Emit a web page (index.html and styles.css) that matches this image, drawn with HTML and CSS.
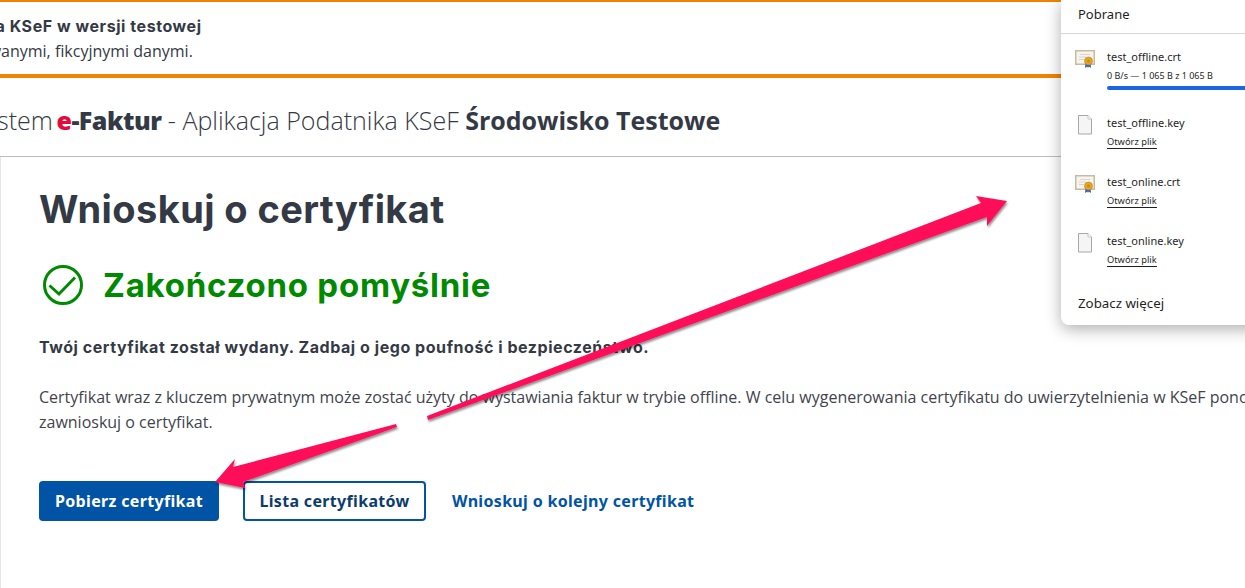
FILE: index.html
```html
<!DOCTYPE html>
<html lang="pl">
<head>
<meta charset="utf-8">
<title>Wnioskuj o certyfikat</title>
<link rel="stylesheet" href="styles.css">
</head>
<body>
<div class="page">
  <section class="banner">
    <div class="banner-inner">
      <p class="banner-title">Aplikacja KSeF w wersji testowej</p>
      <p class="banner-text">generowanymi, fikcyjnymi danymi.</p>
    </div>
  </section>
  <header class="app-header">
    <div class="app-title">System<span class="brand"><span class="brand-e">e</span>-Faktur</span> - Aplikacja Podatnika KSeF <strong class="env">Środowisko Testowe</strong></div>
  </header>
  <main class="content">
    <h1 class="page-title">Wnioskuj o certyfikat</h1>
    <div class="status">
      <svg class="status-icon" viewBox="0 0 40 40" aria-hidden="true"><circle cx="20" cy="20" r="18.500" fill="none" stroke="#008a00" stroke-width="3"/><path d="M6.500 20.500 16 29 32 12.500" fill="none" stroke="#008a00" stroke-width="3"/></svg>
      <h2 class="status-title">Zakończono pomyślnie</h2>
    </div>
    <p class="lead">Twój certyfikat został wydany. Zadbaj o jego poufność i bezpieczeństwo.</p>
    <p class="body-text">Certyfikat wraz z kluczem prywatnym może zostać użyty do wystawiania faktur w trybie offline. W celu wygenerowania certyfikatu do uwierzytelnienia w KSeF ponownie zawnioskuj o certyfikat.</p>
    <div class="actions">
      <a class="btn btn-primary">Pobierz certyfikat</a>
      <a class="btn btn-outline">Lista certyfikatów</a>
      <a class="btn-link">Wnioskuj o kolejny certyfikat</a>
    </div>
  </main>
</div>

<aside class="downloads">
  <div class="downloads-head">Pobrane</div>
  <ul class="dl-list">
    <li class="dl-item dl-item-progress">
      <svg class="dl-icon" viewBox="0 0 20 20" aria-hidden="true"><rect x="0" y="1" width="20" height="15" fill="#c9baa4"/><rect x="1.500" y="2.500" width="17" height="12" fill="#f7f4ec"/><path d="M5 5.500h10M4 8h7M4 10.500h5" stroke="#d6d6d6"/><path d="M10.500 14 10 19l2.200-1.500.8 1.500.8-1.500 2.200 1.500-.5-5z" fill="#2a5fc0"/><circle cx="13.500" cy="12" r="4" fill="#e3a724" stroke="#b9801a" stroke-width=".6"/><circle cx="13.500" cy="12" r="1.600" fill="#c98c1c"/></svg>
      <div class="dl-body">
        <div class="dl-name">test_offline.crt</div>
        <div class="dl-meta">0 B/s — 1 065 B z 1 065 B</div>
        <div class="dl-bar"></div>
      </div>
    </li>
    <li class="dl-item">
      <svg class="dl-icon" viewBox="0 0 20 20" aria-hidden="true"><path d="M3.500.5h9.500l3.500 3.500v15h-13z" fill="#f5f5f5" stroke="#a8a8a8"/><path d="M13 .5v3.500h3.500" fill="#fff" stroke="#c4c4c4"/></svg>
      <div class="dl-body">
        <div class="dl-name">test_offline.key</div>
        <a class="dl-open">Otwórz plik</a>
      </div>
    </li>
    <li class="dl-item">
      <svg class="dl-icon" viewBox="0 0 20 20" aria-hidden="true"><rect x="0" y="1" width="20" height="15" fill="#c9baa4"/><rect x="1.500" y="2.500" width="17" height="12" fill="#f7f4ec"/><path d="M5 5.500h10M4 8h7M4 10.500h5" stroke="#d6d6d6"/><path d="M10.500 14 10 19l2.200-1.500.8 1.500.8-1.500 2.200 1.500-.5-5z" fill="#2a5fc0"/><circle cx="13.500" cy="12" r="4" fill="#e3a724" stroke="#b9801a" stroke-width=".6"/><circle cx="13.500" cy="12" r="1.600" fill="#c98c1c"/></svg>
      <div class="dl-body">
        <div class="dl-name">test_online.crt</div>
        <a class="dl-open">Otwórz plik</a>
      </div>
    </li>
    <li class="dl-item">
      <svg class="dl-icon" viewBox="0 0 20 20" aria-hidden="true"><path d="M3.500.5h9.500l3.500 3.500v15h-13z" fill="#f5f5f5" stroke="#a8a8a8"/><path d="M13 .5v3.500h3.500" fill="#fff" stroke="#c4c4c4"/></svg>
      <div class="dl-body">
        <div class="dl-name">test_online.key</div>
        <a class="dl-open">Otwórz plik</a>
      </div>
    </li>
  </ul>
  <div class="dl-more">Zobacz więcej</div>
</aside>

<svg class="arrows" viewBox="0 0 1245 588" aria-hidden="true">
  <defs>
    <filter id="arrow-shadow" x="-5%" y="-5%" width="110%" height="110%"><feDropShadow dx="1" dy="2" stdDeviation="1.200" flood-color="#000" flood-opacity=".45"/></filter>
  </defs>
  <g filter="url(#arrow-shadow)" fill="#fe1159">
    <polygon points="396,424 233,467 235,459 215,482 245,488 243,482 397,427"/>
    <polygon points="427,416 981,203 976,196 1007,201 987,226 987,217 428,420"/>
  </g>
</svg>
```

FILE: styles.css
```css
* { box-sizing: border-box; }
html, body { margin: 0; padding: 0; height: 100%; overflow: hidden; background: #fff; }
body { font-family: "Open Sans", "Noto Sans", sans-serif; color: #343a45; position: relative; }
p, h1, h2, ul { margin: 0; padding: 0; }

.page { width: 1245px; height: 588px; overflow: hidden; display: flex; flex-direction: column; }

.banner { height: 78px; flex: none; border-top: 2px solid #f28300; border-bottom: 4px solid #f28300; overflow: hidden; }
.banner-inner { margin-left: -72px; padding-top: 14px; }
.banner-title { font-family: Inter, "Open Sans", sans-serif; font-weight: 700; font-size: 16px; letter-spacing: .56px; line-height: 20px; white-space: nowrap; }
.banner-text { font-size: 16px; line-height: 20px; margin: 5px 0 0 8px; white-space: nowrap; }

.app-header { height: 79px; flex: none; border-bottom: 1px solid #bdbdbd; display: flex; align-items: center; padding-top: 6px; overflow: hidden; }
.app-title { margin-left: -28px; font-size: 25px; font-weight: 300; white-space: nowrap; line-height: 30px; }
.brand { font-weight: 800; margin-left: 3.500px; letter-spacing: -.5px; }
.brand-e { color: #e30a3c; }
.env { font-weight: 700; }

.content { flex: 1; border-left: 1px solid #e6e6e6; padding-left: 38px; min-width: 0; }
.page-title { font-family: Inter, sans-serif; font-weight: 700; font-size: 38px; letter-spacing: .4px; line-height: 44px; margin-top: 30px; white-space: nowrap; color: #343a45; }
.status { display: flex; align-items: center; gap: 20px; margin-top: 34px; padding-left: 4px; }
.status-icon { width: 40px; height: 40px; flex: none; }
.status-title { font-family: Inter, sans-serif; font-weight: 700; font-size: 33px; letter-spacing: .75px; line-height: 40px; color: #008a00; white-space: nowrap; }
.lead { font-family: Inter, sans-serif; font-weight: 700; font-size: 16px; letter-spacing: .55px; line-height: 22px; margin-top: 31px; white-space: nowrap; }
.body-text { font-size: 16px; line-height: 24.500px; margin-top: 27px; width: 1320px; color: #3f444d; }
.actions { display: flex; align-items: center; margin-top: 47px; }
.btn { height: 40px; display: flex; align-items: center; justify-content: center; border-radius: 4px; font-family: "Noto Sans", sans-serif; font-weight: 700; font-size: 16px; letter-spacing: .33px; white-space: nowrap; }
.btn-primary { width: 180px; background: #0053a5; color: #fff; }
.btn-outline { width: 183px; margin-left: 24px; background: #fff; color: #0c3c6e; border: 2px solid #0053a5; }
.btn-link { margin-left: 26px; font-family: "Noto Sans", sans-serif; font-weight: 700; font-size: 16px; letter-spacing: .32px; color: #0053a5; white-space: nowrap; }

.downloads { position: absolute; left: 1061px; top: 0; width: 200px; height: 325px; background: #fff; border-bottom-left-radius: 8px; box-shadow: 0 4px 16px rgba(0,0,0,.32); font-family: "Noto Sans", "Open Sans", sans-serif; color: #1f1f1f; }
.downloads-head { height: 34px; padding: 5px 0 0 17px; font-size: 13px; line-height: 18px; border-bottom: 1px solid #d6d6d6; }
.dl-list { list-style: none; padding: 15px 0 0 14px; }
.dl-item { display: flex; gap: 12px; height: 59px; }
.dl-item-progress { height: 66px; }
.dl-icon { width: 20px; height: 20px; flex: none; }
.dl-body { flex: 1; min-width: 0; margin-right: -14px; }
.dl-name { font-size: 11px; line-height: 16px; white-space: nowrap; }
.dl-meta { font-size: 9px; line-height: 12px; margin-top: 5px; white-space: nowrap; }
.dl-bar { height: 4px; background: #1a66e0; border-radius: 2px 0 0 2px; margin-top: 4px; }
.dl-open { display: block; width: fit-content; font-size: 9.300px; line-height: 11px; margin-top: 5px; padding-bottom: 1px; border-bottom: 1px solid #1f1f1f; white-space: nowrap; }
.dl-more { padding: 0 0 0 17px; font-size: 13.300px; line-height: 18px; margin-top: 2px; }

.arrows { position: absolute; left: 0; top: 0; width: 1245px; height: 588px; pointer-events: none; }
```
